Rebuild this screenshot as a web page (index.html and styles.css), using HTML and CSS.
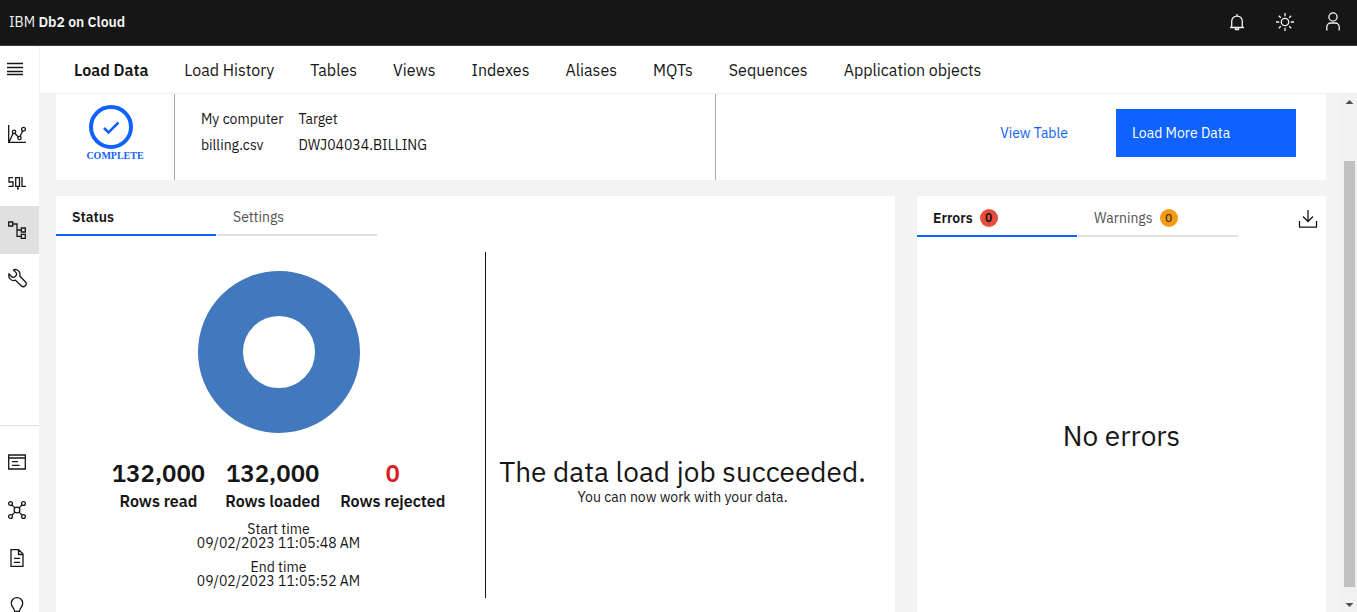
FILE: index.html
```html
<!DOCTYPE html>
<html lang="en">
<head>
<meta charset="utf-8">
<meta name="viewport" content="width=device-width, initial-scale=1">
<title>IBM Db2 on Cloud</title>
<link rel="stylesheet" href="styles.css">
</head>
<body class="app">
<header class="topbar">
  <a class="brand" href="#">IBM <strong>Db2 on Cloud</strong></a>
  <div class="topbar-actions">
    <button class="top-button" type="button" aria-label="Notifications">
      <svg class="icon" viewBox="0 0 20 20"><path d="M3 15.500h14M4.700 15.500V9.500c0-3.500 2.200-5.300 5.300-5.300s5.300 1.800 5.300 5.300v6M10 2v2M8.500 16v1.500h3V16"/></svg>
    </button>
    <button class="top-button" type="button" aria-label="Theme">
      <svg class="icon" viewBox="0 0 20 20"><circle cx="10" cy="10" r="3.700"/><path d="M10 1v3.200M10 15.800v3.200M1 10h3.200M15.800 10H19M3.800 3.800l2 2M14.200 14.200l2 2M3.800 16.200l2-2M14.200 5.800l2-2"/></svg>
    </button>
    <button class="top-button" type="button" aria-label="Account">
      <svg class="icon" viewBox="0 0 20 20"><circle cx="10" cy="5" r="4.100"/><path d="M3.800 18.500V15a4 4 0 0 1 4-4h4.400a4 4 0 0 1 4 4v3.500"/></svg>
    </button>
  </div>
</header>
<div class="workspace">
  <aside class="sidebar">
    <button class="side-button menu-button" type="button" aria-label="Menu">
      <svg class="icon" viewBox="0 0 20 20"><path d="M0 4.500h16M0 8.500h16M0 12.500h16M0 15.500h16"/></svg>
    </button>
    <nav class="side-group" aria-label="Sections">
      <button class="side-button" type="button" aria-label="Monitor">
        <svg class="icon" viewBox="0 0 20 20"><path d="M1.700 1v17.300H19M2 18L6.200 9.300M7.700 9.300l4 4M13 12.500l2.700-5.700"/><circle cx="7" cy="7.800" r="1.700"/><circle cx="12.500" cy="14" r="1.700"/><circle cx="16.500" cy="5.300" r="1.900"/></svg>
      </button>
      <button class="side-button" type="button" aria-label="SQL">
        <svg class="icon icon-sql" viewBox="0 0 20 20"><path d="M6 5.700H2V10h4v4.300H1.500M8.700 5.700h3.800v8.600H8.700zM10.700 14.300v2.500H12M15 5v9.300h4"/></svg>
      </button>
      <button class="side-button side-button-active" type="button" aria-label="Data" aria-current="page">
        <svg class="icon" viewBox="0 0 20 20"><path d="M1.700 2h4v4h-4zM14.300 8h4v4h-4zM14.300 14.300h4v4h-4zM5.700 4H10v12.300h4.300M10 10h4.300"/></svg>
      </button>
      <button class="side-button" type="button" aria-label="Administration">
        <svg class="icon" viewBox="0 0 20 20"><path d="M8.300 1.300a5 5 0 0 1 4.400 6.700l5.600 5.700a2.900 2.900 0 0 1-4.100 4.100l-5.700-5.600A5 5 0 0 1 2 6l3.400 3.300c2.300.4 4.600-1.800 4.200-4L6.500 2a5 5 0 0 1 1.800-.7z"/></svg>
      </button>
    </nav>
    <nav class="side-group side-group-bottom" aria-label="Resources">
      <button class="side-button" type="button" aria-label="Overview">
        <svg class="icon" viewBox="0 0 20 20"><path d="M1.700 3h16.600v14H1.700zM1.700 6h16.600M5 9.700h6M5 13.300h7.500"/></svg>
      </button>
      <button class="side-button" type="button" aria-label="Connections">
        <svg class="icon" viewBox="0 0 20 20"><circle cx="10" cy="10" r="2.900"/><circle cx="3.500" cy="3.500" r="1.900"/><circle cx="16.500" cy="3.500" r="1.900"/><circle cx="3.500" cy="16.500" r="1.900"/><circle cx="16.500" cy="16.500" r="1.900"/><path d="M5 5l2.900 2.900M15 5l-2.900 2.900M5 15l2.900-2.900M15 15l-2.900-2.900"/></svg>
      </button>
      <button class="side-button" type="button" aria-label="Documentation">
        <svg class="icon" viewBox="0 0 20 20"><path d="M4 1.700h7.700L16 6v12.300H4zM11.500 2v4.500H16M7 10.300h6M7 14.300h6"/></svg>
      </button>
      <button class="side-button" type="button" aria-label="Tips">
        <svg class="icon" viewBox="0 0 20 20"><path d="M7.500 15c0-3-3.200-4-3.200-7.700a5.700 5.700 0 0 1 11.400 0c0 3.700-3.200 4.700-3.200 7.700M7 15.300h6M8 18.300h4"/></svg>
      </button>
    </nav>
  </aside>
  <main class="main">
    <nav class="page-nav" aria-label="Data">
      <a class="page-link page-link-active" href="#" aria-current="page">Load Data</a>
      <a class="page-link" href="#">Load History</a>
      <a class="page-link" href="#">Tables</a>
      <a class="page-link" href="#">Views</a>
      <a class="page-link" href="#">Indexes</a>
      <a class="page-link" href="#">Aliases</a>
      <a class="page-link" href="#">MQTs</a>
      <a class="page-link" href="#">Sequences</a>
      <a class="page-link" href="#">Application objects</a>
    </nav>
    <div class="viewport">
      <div class="content">
        <section class="summary">
          <div class="job-state">
            <svg class="state-ring" viewBox="0 0 44 44"><circle cx="22" cy="22" r="20"/><path d="M15 23l4.500 4.500L29.500 17.500"/></svg>
            <span>COMPLETE</span>
          </div>
          <div class="job-route">
            <table class="route-table">
              <thead><tr><th scope="col">My computer</th><th scope="col">Target</th></tr></thead>
              <tbody><tr><td>billing.csv</td><td>DWJ04034.BILLING</td></tr></tbody>
            </table>
          </div>
          <div class="job-actions">
            <a class="view-link" href="#">View Table</a>
            <button class="primary-button" type="button">Load More Data</button>
          </div>
        </section>
        <div class="panels">
          <section class="panel">
            <div class="tabs" role="tablist">
              <button class="tab tab-active" type="button" role="tab" aria-selected="true">Status</button>
              <button class="tab" type="button" role="tab" aria-selected="false">Settings</button>
            </div>
            <div class="status-body">
              <div class="status-chart">
                <svg class="donut" viewBox="0 0 162 162" role="img" aria-label="132,000 of 132,000 rows loaded"><circle cx="81" cy="81" r="58.500"/></svg>
                <dl class="stats">
                  <div class="stat"><dt>Rows read</dt><dd>132,000</dd></div>
                  <div class="stat"><dt>Rows loaded</dt><dd>132,000</dd></div>
                  <div class="stat stat-rejected"><dt>Rows rejected</dt><dd>0</dd></div>
                </dl>
                <dl class="times">
                  <div><dt>Start time</dt><dd>09/02/2023 11:05:48 AM</dd></div>
                  <div><dt>End time</dt><dd>09/02/2023 11:05:52 AM</dd></div>
                </dl>
              </div>
              <div class="status-message">
                <h2 class="headline">The data load job succeeded.</h2>
                <p class="subline">You can now work with your data.</p>
              </div>
            </div>
          </section>
          <section class="panel">
            <div class="panel-head">
              <div class="tabs tabs-counted" role="tablist">
                <button class="tab tab-active" type="button" role="tab" aria-selected="true">Errors <span class="count count-error">0</span></button>
                <button class="tab" type="button" role="tab" aria-selected="false">Warnings <span class="count count-warning">0</span></button>
              </div>
              <button class="download-button" type="button" aria-label="Download">
                <svg class="icon" viewBox="0 0 20 20"><path d="M10 1v11.500M5 7.500l5 5 5-5M1.500 12v6.200h17V12"/></svg>
              </button>
            </div>
            <div class="empty"><p class="headline">No errors</p></div>
          </section>
        </div>
      </div>
      <div class="scrollbar" aria-hidden="true">
        <svg class="scroll-arrow" viewBox="0 0 15 15"><path d="M3.500 10h8l-4-4z"/></svg>
        <div class="scroll-track"><div class="scroll-thumb"></div></div>
        <svg class="scroll-arrow" viewBox="0 0 15 15"><path d="M3.500 6h8l-4 4z"/></svg>
      </div>
    </div>
  </main>
</div>
</body>
</html>
```
FILE: styles.css
```css
* {
  box-sizing: border-box;
}

.app {
  display: flex;
  flex-direction: column;
  height: 100vh;
  margin: 0;
  overflow: hidden;
  background: #f3f3f3;
  color: #161616;
  font-family: "IBM Plex Sans", Roboto, sans-serif;
  font-size: 14px;
  line-height: 18px;
}

button {
  border: 0;
  padding: 0;
  background: none;
  color: inherit;
  font: inherit;
  cursor: pointer;
}

a {
  color: inherit;
  text-decoration: none;
}

dl, dd, p, h2 {
  margin: 0;
}

.icon {
  display: block;
  width: 20px;
  height: 20px;
  fill: none;
  stroke: currentColor;
  stroke-width: 1.3;
}

/* Top bar */
.topbar {
  display: flex;
  flex: none;
  align-items: center;
  justify-content: space-between;
  height: 46px;
  padding: 0 0 2px 9px;
  border-bottom: 1px solid #393939;
  background: #161616;
  color: #f4f4f4;
}

.brand strong {
  font-weight: 600;
}

.topbar-actions {
  display: flex;
}

.top-button {
  display: grid;
  place-items: center;
  width: 48px;
  height: 42px;
}

.workspace {
  display: flex;
  flex: 1;
  min-height: 0;
}

/* Side rail */
.sidebar {
  display: flex;
  flex: none;
  flex-direction: column;
  width: 40px;
  border-right: 1px solid #f3f3f3;
  background: #fff;
  overflow: hidden;
}

.side-button {
  display: flex;
  flex: none;
  align-items: center;
  width: 100%;
  height: 48px;
  padding-left: 7px;
}

.menu-button {
  height: 46px;
}

.side-button-active {
  background: #e0e0e0;
}

.side-group {
  display: flex;
  flex: none;
  flex-direction: column;
  padding-top: 18px;
}

.side-group-bottom {
  height: 187px;
  margin-top: auto;
  padding-top: 12px;
  border-top: 1px solid #e0e0e0;
  overflow: hidden;
}

/* Page navigation */
.main {
  display: flex;
  flex: 1;
  flex-direction: column;
  min-width: 0;
}

.page-nav {
  display: flex;
  flex: none;
  gap: 36px;
  align-items: center;
  height: 48px;
  padding: 0 34px;
  border-bottom: 1px solid #f0f0f0;
  background: #fff;
  font-size: 16px;
  line-height: 24px;
  white-space: nowrap;
}

.page-link-active {
  font-weight: 600;
}

.viewport {
  display: flex;
  flex: 1;
  min-height: 0;
}

.content {
  display: flex;
  flex: 1;
  flex-direction: column;
  gap: 16px;
  min-width: 0;
  padding: 0 16px;
}

/* Job summary */
.summary {
  display: grid;
  flex: none;
  grid-template-columns: 119px 541fr 610fr;
  height: 86px;
  background: #fff;
}

.job-state {
  display: flex;
  flex-direction: column;
  align-items: center;
  padding-top: 11px;
  border-right: 1px solid #a8a8a8;
  color: #0f62fe;
  font: bold 10px/12px "Liberation Serif", serif;
}

.state-ring {
  width: 44px;
  height: 44px;
  margin: 0 8px 1px 0;
  fill: none;
  stroke: currentColor;
  stroke-width: 4;
}

.state-ring path {
  stroke-width: 2.5;
}

.job-route {
  padding: 12px 26px;
  border-right: 1px solid #a8a8a8;
}

.route-table {
  border-collapse: collapse;
  line-height: 26px;
  text-align: left;
}

.route-table th,
.route-table td {
  padding: 0 15px 0 0;
  font-weight: 400;
}

.job-actions {
  display: flex;
  gap: 48px;
  align-items: flex-start;
  justify-content: flex-end;
  padding: 15px 30px;
  line-height: 48px;
}

.view-link {
  color: #0f62fe;
}

.primary-button {
  width: 180px;
  height: 48px;
  padding: 0 16px;
  background: #0f62fe;
  color: #fff;
  text-align: left;
}

/* Panels */
.panels {
  display: grid;
  flex: 1;
  grid-template-columns: 839fr 409fr;
  gap: 22px;
  min-height: 0;
}

.panel {
  display: flex;
  flex-direction: column;
  background: #fff;
}

.panel-head {
  display: flex;
  align-items: center;
  justify-content: space-between;
}

.tabs {
  display: flex;
  gap: 1px;
}

.tab {
  display: flex;
  gap: 7px;
  align-items: center;
  width: 160px;
  height: 40px;
  padding: 4px 16px 0;
  border-bottom: 2px solid #e0e0e0;
  color: #525252;
}

.tabs-counted .tab {
  height: 41px;
}

.tab-active {
  border-color: #0f62fe;
  color: #161616;
  font-weight: 600;
}

.count {
  width: 18px;
  border-radius: 9px;
  color: #161616;
  font-size: 12px;
  line-height: 18px;
  text-align: center;
}

.count-error {
  background: #e74c3c;
}

.count-warning {
  background: #f39c12;
}

.download-button {
  padding: 4px 8px 0;
}

.status-body {
  display: grid;
  grid-template-columns: 414fr 393fr;
  padding: 16px;
}

.status-chart {
  display: flex;
  flex-direction: column;
  align-items: center;
  padding: 19px 0 10px;
  border-right: 1px solid #161616;
}

.donut {
  width: 162px;
  margin-bottom: 26px;
  fill: none;
  stroke: #4178be;
  stroke-width: 45;
}

.stats {
  display: flex;
  gap: 20px;
  margin-bottom: 7px;
  font-weight: 600;
  line-height: 28px;
  text-align: center;
}

.stat {
  display: flex;
  flex-direction: column-reverse;
}

.stat dt {
  font-size: 16px;
}

.stat dd {
  font-size: 24px;
}

.stat-rejected dd {
  color: #da1e28;
}

.times {
  display: grid;
  gap: 10px;
  line-height: 14px;
  text-align: center;
}

.status-message {
  display: flex;
  flex-direction: column;
  align-items: center;
  justify-content: flex-end;
  padding-bottom: 92px;
  white-space: nowrap;
}

.headline {
  font-size: 28px;
  font-weight: 400;
  line-height: 32px;
}

.empty {
  display: grid;
  flex: 1;
  place-items: center;
  padding-top: 20px;
}

/* Scroll bar */
.scrollbar {
  display: flex;
  flex: none;
  flex-direction: column;
  width: 15px;
  background: #f1f1f1;
}

.scroll-arrow {
  width: 15px;
  height: 15px;
  fill: #505050;
}

.scroll-track {
  flex: 1;
  padding: 52px 2px 10px;
}

.scroll-thumb {
  height: 100%;
  background: #c1c1c1;
}
```
